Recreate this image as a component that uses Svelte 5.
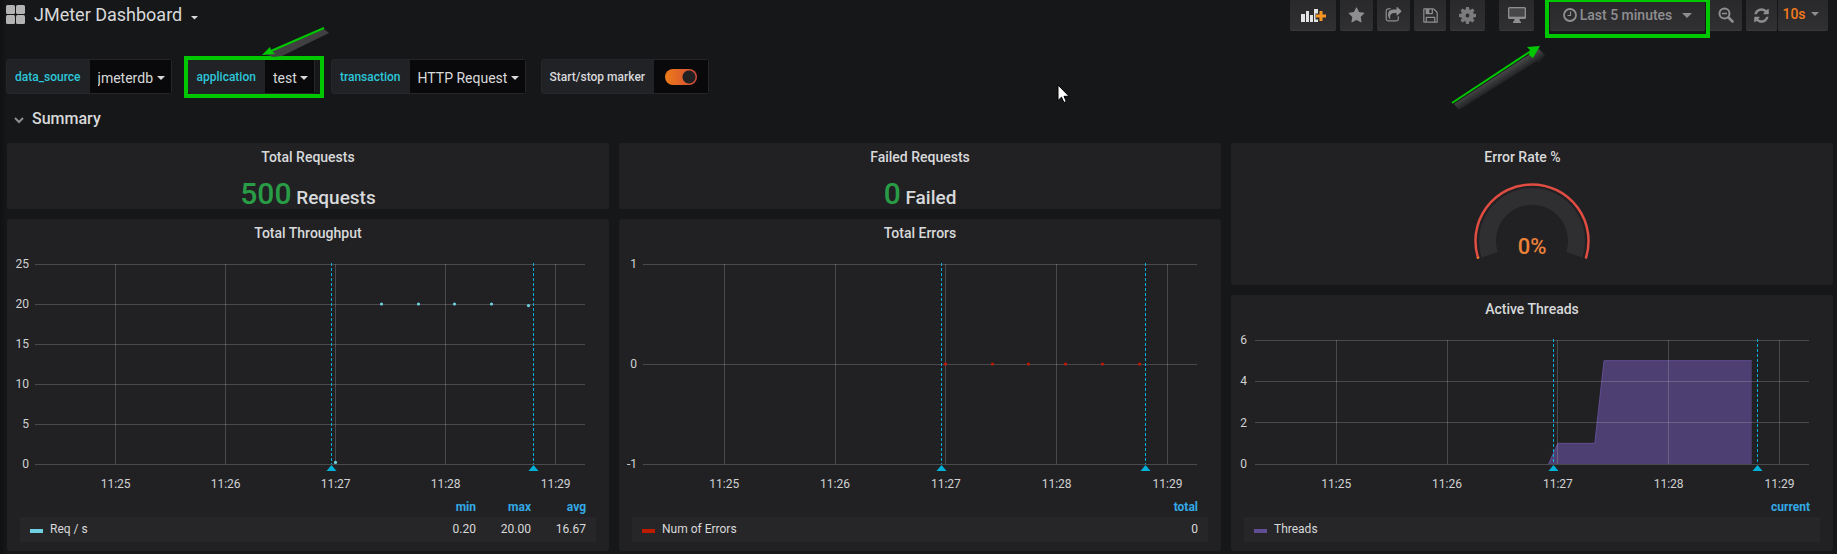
<script>
  const SPAN = 300;
  const START = -44;
  const ticks = [
    { t: 0, label: '11:25' },
    { t: 60, label: '11:26' },
    { t: 120, label: '11:27' },
    { t: 180, label: '11:28' },
    { t: 240, label: '11:29' }
  ];
  const annotations = [117.6, 228];

  const throughput = {
    id: 0, title: 'Total Throughput', height: 250, left: 28, gap: 6, min: 0, max: 25, steps: [0, 5, 10, 15, 20, 25],
    color: '#6ed0e0', dots: [[120, 0.2], [145, 20], [165, 20], [185, 20], [205, 20], [225, 19.8]],
    name: 'Req / s', stats: [['min', '0.20'], ['max', '20.00'], ['avg', '16.67']]
  };
  const errors = {
    id: 1, title: 'Total Errors', height: 250, left: 24, gap: 6, min: -1, max: 1, steps: [-1, 0, 1],
    color: '#bf1b00', dots: [[120, 0], [145, 0], [165, 0], [185, 0], [205, 0], [225, 0]],
    name: 'Num of Errors', stats: [['total', '0']]
  };
  const threads = {
    id: 2, title: 'Active Threads', height: 174, left: 24, gap: 8, min: 0, max: 6, steps: [0, 2, 4, 6],
    color: '#614d93', dots: [], area: [[115, 0], [120, 1], [140, 1], [145, 5], [225, 5], [225, 0]],
    name: 'Threads', stats: [['current', '']]
  };

  let widths = $state([602, 602, 602]);
  let marker = $state(true);

  const px = (c, t) => c.left + ((t - START) / SPAN) * (widths[c.id] - c.left - 24);
  const py = (c, v) => 17 + ((c.max - v) / (c.max - c.min)) * (c.height - 50);
  const crisp = (n) => Math.floor(n) + 0.5;
  const points = (c, list) => list.map(([t, v]) => `${px(c, t)},${py(c, v)}`).join(' ');
</script>

{#snippet caret()}
  <svg class="caret" width="8" height="4" viewBox="0 0 8 4" aria-hidden="true"><path d="M0 0h8L4 4z" fill="currentColor" /></svg>
{/snippet}

{#snippet fa(path)}
  <svg width="17" height="17" viewBox="0 0 1792 1792" aria-hidden="true"><path d={path} fill="currentColor" /></svg>
{/snippet}

{#snippet graph(c)}
  <section class="panel">
    <h2>{c.title}</h2>
    <div class="plot" bind:clientWidth={widths[c.id]}>
      <svg width={widths[c.id]} height={c.height} role="img" aria-label={c.title}>
        {#if c.area}
          <polygon points={points(c, c.area)} fill={c.color} fill-opacity="0.7" />
          <polyline points={points(c, c.area.slice(0, 5))} fill="none" stroke={c.color} stroke-width="1" />
        {/if}
        <g class="grid" shape-rendering="crispEdges">
          {#each c.steps as v}
            <line x1={c.left} x2={widths[c.id] - 24} y1={crisp(py(c, v))} y2={crisp(py(c, v))} />
          {/each}
          {#each ticks as k}
            <line x1={crisp(px(c, k.t))} x2={crisp(px(c, k.t))} y1="17" y2={c.height - 33} />
          {/each}
        </g>
        {#each c.steps as v}
          <text x={c.left - c.gap} y={Math.round(py(c, v)) + 4} text-anchor="end">{v}</text>
        {/each}
        {#each ticks as k}
          <text x={px(c, k.t)} y={c.height - 9} text-anchor="middle">{k.label}</text>
        {/each}
        {#each c.dots as [t, v]}
          <circle cx={crisp(px(c, t))} cy={py(c, v)} r="1.6" fill={c.color} />
        {/each}
        {#if marker}
          {#each annotations as t}
            {@const x = crisp(px(c, t))}
            <line class="mark" x1={x} x2={x} y1="16" y2={c.height - 33} />
            <path d="M{x} {c.height - 32}l5 6h-10z" fill="#00b0d8" />
          {/each}
        {/if}
      </svg>
    </div>
    <table>
      <thead>
        <tr>
          <td></td>
          {#each c.stats as [head]}<th scope="col">{head}</th>{/each}
        </tr>
      </thead>
      <tbody>
        <tr>
          <th scope="row"><span class="swatch" style="background:{c.color}"></span>{c.name}</th>
          {#each c.stats as [, value]}<td>{value}</td>{/each}
        </tr>
      </tbody>
    </table>
  </section>
{/snippet}

<main>
  <header>
    <button class="title">
      <svg width="19" height="19" viewBox="0 0 19 19" aria-hidden="true">
        <g fill="#b3b3b3"><rect width="9" height="9" rx="1.5" /><rect x="10" width="9" height="9" rx="1.5" /><rect y="10" width="9" height="9" rx="1.5" /><rect x="10" y="10" width="9" height="9" rx="1.5" /></g>
      </svg>
      <span>JMeter Dashboard</span>
      <svg class="down" width="7" height="4" viewBox="0 0 7 4" aria-hidden="true"><path d="M0 0h7L3.500 3.500z" fill="currentColor" /></svg>
    </button>
    <nav class="tools">
      <button class="tool add" aria-label="Add panel">
        <svg width="25" height="15" viewBox="0 0 25 15" aria-hidden="true">
          <g fill="#e3e3e3"><rect y="6" width="4" height="8" /><rect x="5" y="3" width="3" height="11" /><rect x="9" y="7" width="3" height="7" /><rect x="13" y="1" width="4" height="13" /></g>
          <path d="M17.500 2.500h5v3h3v6h-3v3h-5v-3h-3v-6h3z" fill="#303033" />
          <path d="M18.500 3h3v3.500H25v3h-3.500V13h-3V9.500H15v-3h3.500z" fill="#f79520" />
        </svg>
      </button>
      <button class="tool" aria-label="Star">{@render fa('M1728 647q0 22-26 48l-363 354 86 500q1 7 1 20 0 21-10.500 35.500t-30.500 14.500q-19 0-40-12l-449-236-449 236q-22 12-40 12-21 0-31.500-14.500t-10.500-35.500q0-6 2-20l86-500-364-354q-25-27-25-48 0-37 56-46l502-73 225-455q19-41 49-41t49 41l225 455 502 73q56 9 56 46z')}</button>
      <button class="tool" aria-label="Share">{@render fa('M1472 989v259q0 119-84.500 203.500t-203.500 84.500h-832q-119 0-203.500-84.500t-84.500-203.500v-832q0-119 84.500-203.500t203.500-84.500h255q13 0 22.500 9.500t9.500 22.500q0 27-26 32-77 26-133 60-10 4-16 4h-112q-66 0-113 47t-47 113v832q0 66 47 113t113 47h832q66 0 113-47t47-113v-214q0-19 18-29 28-13 54-37 16-16 35-8 21 9 21 29zm237-496l-384 384q-18 19-45 19-12 0-25-5-39-17-39-59v-192h-160q-323 0-438 131-119 137-74 473 3 23-20 34-8 2-12 2-16 0-26-13-10-14-21-31t-39.500-68.500-49.500-99.500-38.500-114-17.500-122q0-49 3.500-91t14-90 28-88 47-81.500 68.500-74 94.500-61.500 124.500-48.500 159.500-30.500 196.500-11h160v-192q0-42 39-59 13-5 25-5 26 0 45 19l384 384q19 19 19 45t-19 45z')}</button>
      <button class="tool save" aria-label="Save">{@render fa('M512 1536h768v-384h-768v384zm896 0h128v-896q0-14-10-38.500t-20-34.500l-281-281q-10-10-34-20t-39-10v416q0 40-28 68t-68 28h-576q-40 0-68-28t-28-68v-416h-128v1280h128v-416q0-40 28-68t68-28h832q40 0 68 28t28 68v416zm-384-928v-320q0-13-9.500-22.500t-22.500-9.500h-192q-13 0-22.500 9.500t-9.500 22.500v320q0 13 9.500 22.500t22.500 9.500h192q13 0 22.500-9.500t9.500-22.500zm640 32v928q0 40-28 68t-68 28h-1344q-40 0-68-28t-28-68v-1344q0-40 28-68t68-28h928q40 0 88 20t76 48l280 280q28 28 48 76t20 88z')}</button>
      <button class="tool wide" aria-label="Settings">
        <svg width="17" height="17" viewBox="-9 -9 18 18" aria-hidden="true">
          <g fill="#7b7b7d">
            {#each [0, 45, 90, 135, 180, 225, 270, 315] as a}
              <path d="M-2.300 -5L-1.500 -9h3L2.300 -5z" transform="rotate({a})" />
            {/each}
          </g>
          <circle r="4.300" fill="none" stroke="#7b7b7d" stroke-width="4.600" />
        </svg>
      </button>
      <button class="tool wide monitor" aria-label="Cycle view mode">
        <svg width="18" height="16" viewBox="0 0 18 16" aria-hidden="true">
          <path d="M1.500 0h15Q18 0 18 1.500v9q0 1.500-1.500 1.500H11.500l.5 2.500h1V16H5v-1.500h1l.5-2.500H1.500Q0 12 0 10.500v-9Q0 0 1.500 0zM1.500 1.500v8h15v-8z" fill="#8e8e90" fill-rule="evenodd" />
          <rect x="2" y="2" width="14" height="7" fill="#47474a" />
        </svg>
      </button>
      <div class="time">
        <button class="tool range">
          <svg width="14" height="14" viewBox="0 0 14 14" fill="none" stroke="currentColor" aria-hidden="true"><circle cx="7" cy="7" r="6" stroke-width="1.800" /><path d="M7.500 3.500v4H4.500" stroke-width="1.200" /></svg>
          <span>Last 5 minutes</span>
          <svg class="big" width="10" height="5" viewBox="0 0 10 5" aria-hidden="true"><path d="M0 0h10L5 5z" fill="currentColor" /></svg>
        </button>
        <span class="frame"></span>
        <svg class="arrow long" width="100" height="70" viewBox="0 0 100 70" aria-hidden="true">
          <defs><linearGradient id="fade" gradientUnits="userSpaceOnUse" x1="45" y1="36" x2="50" y2="44"><stop offset="0" stop-color="#454546" /><stop offset="1" stop-color="#1e1f21" /></linearGradient></defs>
          <path d="M5 62l79-52 6-3 6 6-6 8-2-2L10 68z" fill="url(#fade)" />
          <path d="M3 61L82 9" stroke="#00c800" stroke-width="2" />
          <path d="M91 4L78 5l3 3-1 5 4 3z" fill="#00c800" />
        </svg>
      </div>
      <button class="tool zoom" aria-label="Zoom out">
        <svg width="16" height="16" viewBox="0 0 16 16" fill="none" stroke="currentColor" aria-hidden="true"><circle cx="6.500" cy="6.500" r="5" stroke-width="2" /><path d="M4 6.500h5" stroke-width="1.600" /><path d="M10.500 10.500l4 4" stroke-width="2.600" stroke-linecap="round" /></svg>
      </button>
      <button class="tool refresh" aria-label="Refresh">{@render fa('M1639 1056q0 5-1 7-64 268-268 434.500t-478 166.500q-146 0-282.500-55t-243.500-157l-129 129q-19 19-45 19t-45-19-19-45v-448q0-26 19-45t45-19h448q26 0 45 19t19 45-19 45l-137 137q71 66 161 102t187 36q134 0 250-65t186-179q11-17 53-117 8-23 30-23h192q13 0 22.500 9.500t9.500 22.500zm25-800v448q0 26-19 45t-45 19h-448q-26 0-45-19t-19-45 19-45l138-138q-148-137-349-137-134 0-250 65t-186 179q-11 17-53 117-8 23-30 23h-199q-13 0-22.500-9.500t-9.500-22.500v-7q65-268 270-434.500t480-166.500q146 0 284 55.500t245 156.500l130-129q19-19 45-19t45 19 19 45z')}</button>
      <button class="tool interval"><span>10s</span>{@render caret()}</button>
    </nav>
  </header>

  <form class="variables">
    <div class="field">
      <label for="source">data_source</label>
      <div class="pick"><select id="source"><option>jmeterdb</option></select>{@render caret()}</div>
    </div>
    <div class="field app">
      <label for="application">application</label>
      <div class="pick"><select id="application"><option>test</option></select>{@render caret()}</div>
      <span class="frame"></span>
      <svg class="arrow short" width="70" height="36" viewBox="0 0 70 36" aria-hidden="true">
        <path d="M62 3l5 4-47 23-9 1-7-3 7-3z" fill="#404041" />
        <path d="M62 2L9 25" stroke="#00c800" stroke-width="2" />
        <path d="M0 29l8-8 1 3 4 4z" fill="#00c800" />
      </svg>
    </div>
    <div class="field">
      <label for="transaction">transaction</label>
      <div class="pick"><select id="transaction"><option>HTTP Request</option></select>{@render caret()}</div>
    </div>
    <div class="field plain">
      <label for="marker">Start/stop marker</label>
      <div class="toggle"><input id="marker" type="checkbox" bind:checked={marker} /></div>
    </div>
  </form>

  <button class="row">
    <svg width="10" height="7" viewBox="0 0 10 7" fill="none" stroke="#8e8e90" stroke-width="2" aria-hidden="true"><path d="M1 1l4 4 4-4" /></svg>
    <span>Summary</span>
  </button>

  <div class="panels">
    <div class="column">
      <section class="panel stat"><h2>Total Requests</h2><p><b>500</b> Requests</p></section>
      {@render graph(throughput)}
    </div>
    <div class="column">
      <section class="panel stat"><h2>Failed Requests</h2><p><b>0</b> Failed</p></section>
      {@render graph(errors)}
    </div>
    <div class="column">
      <section class="panel gauge">
        <h2>Error Rate %</h2>
        <svg width="124" height="114" viewBox="-62 -70 124 114" role="img" aria-label="0%">
          <path d="M-50.400 16.400A53 53 0 1 1 50.400 16.400L34.200 11.100A36 36 0 1 0 -34.200 11.100z" fill="#2f2f32" />
          <path d="M-53.700 17.500A56.500 56.500 0 1 1 53.700 17.500" fill="none" stroke="#e24d42" stroke-width="2.500" />
          <path d="M-53.700 17.500l-.5-1.500" stroke="#ed8128" stroke-width="2.500" />
          <text x="0" y="13" text-anchor="middle">0%</text>
        </svg>
      </section>
      {@render graph(threads)}
    </div>
  </div>

  <svg class="pointer" width="14" height="20" viewBox="0 0 14 20" aria-hidden="true">
    <path d="M1 1v15.500l3.500-3.300 2.400 5.300 2.400-1-2.300-5.200H12z" fill="#fff" stroke="#000" />
  </svg>
</main>

<style>
  :global(body) { margin: 0; background: #161719; }
  main {
    position: relative;
    box-sizing: border-box;
    padding: 0 4px 3px 7px;
    background: linear-gradient(90deg, #101113, #161719 7px);
    color: #d8d9da;
    font: 400 14px/20px Roboto, sans-serif;
  }
  button, select { font: inherit; color: inherit; border: 0; margin: 0; padding: 0; background: none; }
  svg { display: block; flex: none; }
  header { display: flex; justify-content: space-between; align-items: flex-start; margin-left: -1px; padding-right: 5px; }
  .title { display: flex; align-items: center; gap: 9px; height: 29px; font-size: 18px; }
  .title .down { margin-top: 6px; }

  .tools { display: flex; align-items: flex-start; gap: 4px; color: #8e8e90; font-weight: 500; }
  .tool {
    display: flex; align-items: center; justify-content: center;
    box-sizing: border-box; width: 33px; height: 31px;
    background: linear-gradient(#29292b, #303033);
    border-bottom: 1px solid #39393c; border-radius: 0 0 2px 2px;
  }
  .add { width: 46px; }
  .save { width: 32px; }
  .wide { width: 35px; }
  .monitor { margin-left: 10px; }
  .time { position: relative; margin-left: 12px; }
  .range { width: 155px; gap: 3px; }
  .range .big { margin-left: 7px; }
  .refresh { width: 31px; }
  .interval { width: 50px; padding: 0 5px 2px 0; gap: 5px; margin-left: -3px; }
  .interval span { color: #f27a1c; }
  .frame { position: absolute; border: 4px solid #00c800; pointer-events: none; }
  .time .frame { inset: -2px -5px -7px -5px; }
  .arrow { position: absolute; pointer-events: none; }
  .long { left: -101px; top: 42px; }

  .variables { display: flex; padding-top: 28px; margin-left: -1px; }
  .field { position: relative; display: flex; box-sizing: border-box; height: 35px; margin-right: 16px; border: 1px solid #262629; border-radius: 3px; background: #212226; }
  .field label { display: flex; align-items: center; padding: 0 9px 0 8px; font-size: 12px; font-weight: 500; color: #2cc7d9; }
  .plain { margin-left: -1px; }
  .plain label { color: #d8d9da; }
  .pick { position: relative; display: flex; background: #09090b; }
  .pick select { appearance: none; padding: 3px 17px 0 8px; outline: 0; }
  .pick :global(.caret) { position: absolute; right: 6px; top: 16px; pointer-events: none; }
  .app .frame { inset: -4px -10px -5px -5px; }
  .short { left: 73px; top: -34px; }
  .toggle { display: flex; align-items: center; padding: 0 11px; background: #09090b; }
  .toggle input {
    appearance: none; box-sizing: border-box; width: 32px; height: 16px; margin: 0; border-radius: 8px;
    background: radial-gradient(circle at 24px 8px, #212124 6px, transparent 7px), linear-gradient(90deg, #eb7b18, #d44a3a);
  }
  .toggle input:not(:checked) { background: radial-gradient(circle at 8px 8px, #212124 6px, #55555a 7px); }

  .row { display: flex; align-items: center; gap: 8px; height: 49px; padding-left: 7px; font-size: 16px; font-weight: 500; }
  .row svg { margin-top: 4px; }

  .panels { display: grid; grid-template-columns: repeat(3, minmax(0, 1fr)); gap: 10px; }
  .column { display: flex; flex-direction: column; gap: 10px; }
  .panel { display: flow-root; background: #212124; border-radius: 3px; }
  h2 { margin: 0; height: 28px; font-size: 14px; line-height: 28px; font-weight: 500; text-align: center; }
  .stat { height: 66px; }
  .stat p { margin: 0; text-align: center; font-size: 19px; line-height: 45px; font-weight: 500; }
  .stat b { font-size: 30px; font-weight: 500; color: #299c46; }
  .gauge h2 { padding-right: 19px; }
  .gauge svg { margin: 0 auto; }
  .gauge text { font-size: 22px; font-weight: 500; fill: #ed8138; }

  .plot { overflow: hidden; }
  .plot text { font-size: 12px; fill: #d0d1d2; }
  .grid line { stroke: #c8c8c8; stroke-opacity: 0.25; }
  .mark { stroke: #00b0d8; stroke-dasharray: 3 2; }

  table { width: calc(100% - 26px); margin: 0 13px 9px; border-collapse: collapse; font-size: 12px; line-height: 16px; }
  td, th { padding: 0; text-align: right; font-weight: 400; }
  thead tr { height: 20px; }
  thead th { color: #33a9e5; font-weight: 700; }
  tbody tr { height: 25px; background: #262628; }
  tbody td, tbody th { padding-bottom: 2px; }
  tbody th { text-align: left; padding-left: 10px; }
  tbody td, thead th { width: 45px; padding-right: 10px; }
  .swatch { display: inline-block; width: 13px; height: 4px; margin-right: 7px; }
  .pointer { position: absolute; left: 1057px; top: 84px; pointer-events: none; }
</style>
